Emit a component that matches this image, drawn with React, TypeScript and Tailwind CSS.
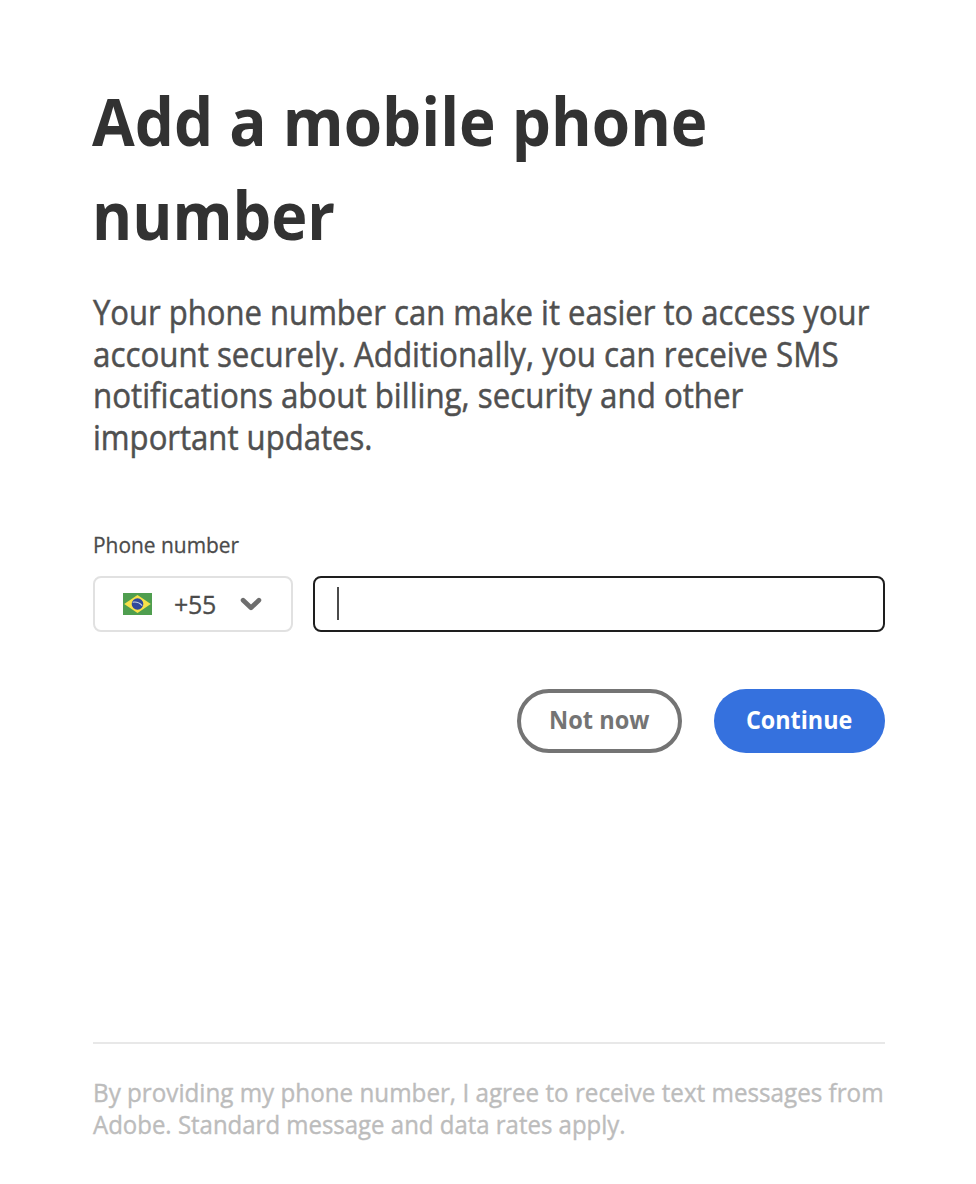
function BrazilFlag() {
  return (
    <svg width="29" height="22" viewBox="0 0 29 22" className="block shrink-0">
      <rect width="29" height="22" fill="#4f9e4f" />
      <path d="M14.5 2 27.8 11 14.5 20 1.2 11Z" fill="#f7e14a" />
      <circle cx="14.5" cy="11" r="5.8" fill="#2f489b" />
      <path d="M9.6 9.2c3.6-.6 7 .5 9.6 3.4" fill="none" stroke="#c3d2e4" strokeWidth="1.1" />
    </svg>
  );
}

function Chevron() {
  return (
    <svg width="22" height="14" viewBox="0 0 22 14" className="block shrink-0">
      <path d="M3.1 3.2 11 10.8 18.9 3.2" fill="none" stroke="#6e6e6e" strokeWidth="4.7" strokeLinecap="round" strokeLinejoin="round" />
    </svg>
  );
}

export default function App() {
  return (
    <main className="flex h-[1184px] w-[976px] flex-col overflow-hidden bg-white pl-[93px] pr-[91px] pt-[73px] font-['Open_Sans',sans-serif]">
      <h1 className="whitespace-nowrap text-[67px] font-bold leading-[94px] text-[#323232]">
        <span className="-ml-px block w-max origin-left scale-x-[0.925]">Add a mobile phone</span>
        <span className="-ml-px block w-max origin-left scale-x-[0.913]">number</span>
      </h1>
      <p className="mt-[31px] whitespace-nowrap text-[34px] leading-[41.5px] text-[#505050] [-webkit-text-stroke:0.5px_#505050]">
        <span className="block w-max origin-left scale-x-[0.913]">Your phone number can make it easier to access your</span>
        <span className="block w-max origin-left scale-x-[0.921]">account securely. Additionally, you can receive SMS</span>
        <span className="block w-max origin-left scale-x-[0.92]">notifications about billing, security and other</span>
        <span className="block w-max origin-left scale-x-[0.914]">important updates.</span>
      </p>
      <label htmlFor="phone" className="mt-[73px] h-7 w-max origin-left scale-x-[0.93] text-[22.5px] leading-7 text-[#4b4b4b] [-webkit-text-stroke:0.3px_#4b4b4b]">
        Phone number
      </label>
      <div className="mt-[17px] flex h-14 gap-5">
        <button className="flex h-14 w-[200px] items-center rounded-lg border-2 border-[#e1e1e1] pl-7">
          <BrazilFlag />
          <span className="ml-[22px] w-[66px] text-left text-[25px] leading-8 tracking-[-0.3px] text-[#4b4b4b] [-webkit-text-stroke:0.3px_#4b4b4b]">
            +55
          </span>
          <Chevron />
        </button>
        <div id="phone" className="flex h-14 flex-1 items-center rounded-lg border-2 border-[#1e1e1e] pb-px pl-[22px]">
          <span className="h-[33px] w-0.5 bg-[#4b4b4b]" />
        </div>
      </div>
      <div className="mt-[57px] flex justify-end gap-8">
        <button className="flex h-16 w-[165px] items-center justify-center rounded-full border-4 border-[#747474] pb-1 text-[25.5px] font-bold text-[#747474]">
          <span className="scale-x-[0.925] whitespace-nowrap">Not now</span>
        </button>
        <button className="flex h-16 w-[171px] items-center justify-center rounded-full bg-[#3571de] pb-1 text-[25.5px] font-bold text-white">
          <span className="scale-x-[0.915] whitespace-nowrap">Continue</span>
        </button>
      </div>
      <footer className="mt-[289px] whitespace-nowrap border-t-2 border-[#e8e8e8] pt-8 text-[26px] leading-8 text-[#bcbcbc] [-webkit-text-stroke:0.4px_#bcbcbc]">
        <span className="block w-max origin-left scale-x-[0.931]">By providing my phone number, I agree to receive text messages from</span>
        <span className="block w-max origin-left scale-x-[0.922]">Adobe. Standard message and data rates apply.</span>
      </footer>
    </main>
  );
}
